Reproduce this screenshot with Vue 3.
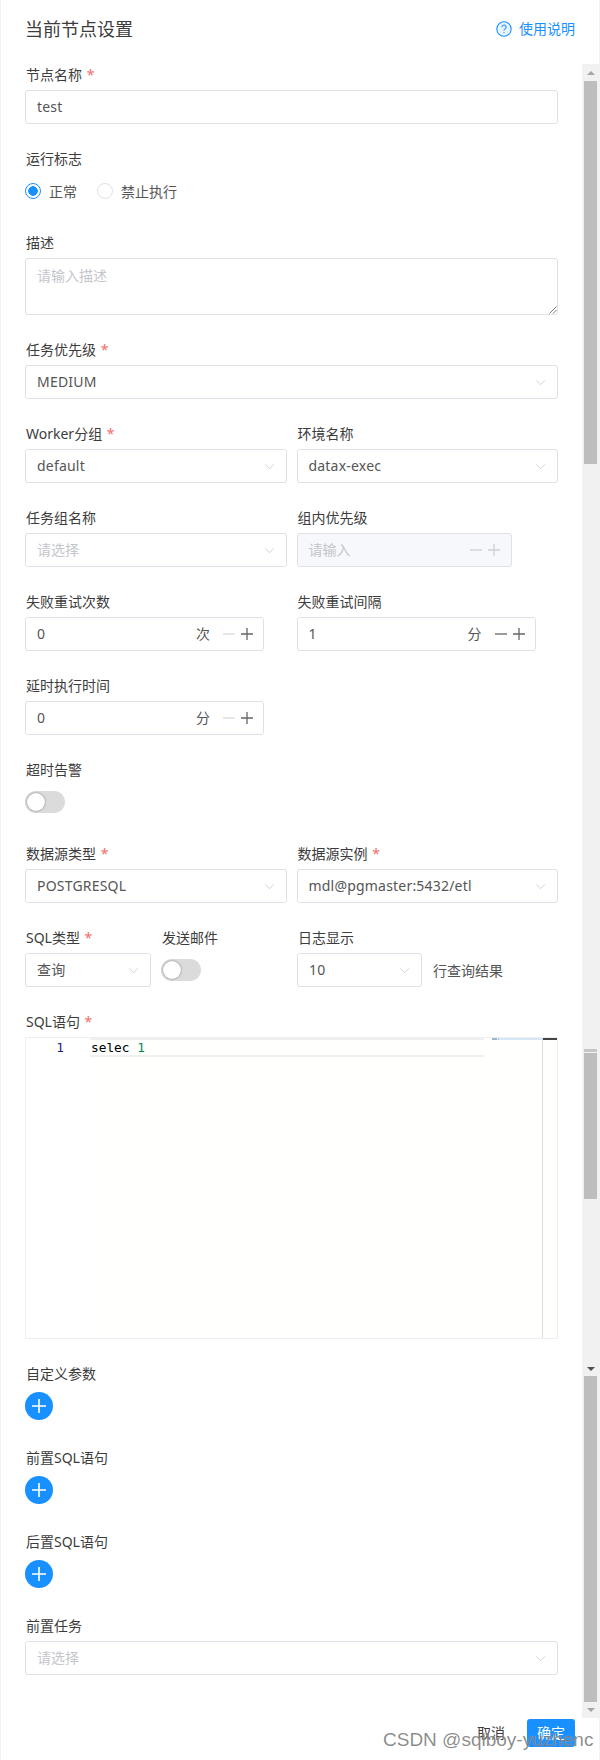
<script setup>
const addRows = ['自定义参数', '前置SQL语句', '后置SQL语句']
</script>

<template>
  <div class="page">
    <header class="head">
      <h1 class="title">当前节点设置</h1>
      <a class="help">
        <svg class="help-icon" viewBox="0 0 16 16">
          <circle cx="8" cy="8" r="7.2" />
          <path d="M5.9 6.2a2.1 2.1 0 1 1 3.3 1.7c-.8.5-1.2.9-1.2 1.7" />
          <path d="M8 11.2v1" />
        </svg>
        使用说明
      </a>
    </header>

    <div class="body">
      <form class="form">
        <div class="field">
          <label class="label">节点名称 <i>*</i></label>
          <div class="box"><span class="val">test</span></div>
        </div>

        <div class="field">
          <label class="label">运行标志</label>
          <div class="radios">
            <span class="radio on"></span><span class="radio-text">正常</span>
            <span class="radio second"></span><span class="radio-text">禁止执行</span>
          </div>
        </div>

        <div class="field">
          <label class="label">描述</label>
          <div class="box area">
            <span class="ph">请输入描述</span>
            <svg class="grip" viewBox="0 0 9 9"><path d="M8.5 1.5 1.5 8.500M8.500 5 5 8.500" /></svg>
          </div>
        </div>

        <div class="field">
          <label class="label">任务优先级 <i>*</i></label>
          <div class="box">
            <span class="val">MEDIUM</span>
            <svg class="chev" viewBox="0 0 12 8"><path d="M1 1.500 6 6.500l5-5" /></svg>
          </div>
        </div>

        <div class="row">
          <div class="field">
            <label class="label">Worker分组 <i>*</i></label>
            <div class="box">
              <span class="val">default</span>
              <svg class="chev" viewBox="0 0 12 8"><path d="M1 1.500 6 6.500l5-5" /></svg>
            </div>
          </div>
          <div class="field">
            <label class="label">环境名称</label>
            <div class="box">
              <span class="val">datax-exec</span>
              <svg class="chev" viewBox="0 0 12 8"><path d="M1 1.500 6 6.500l5-5" /></svg>
            </div>
          </div>
        </div>

        <div class="row">
          <div class="field">
            <label class="label">任务组名称</label>
            <div class="box">
              <span class="ph">请选择</span>
              <svg class="chev" viewBox="0 0 12 8"><path d="M1 1.500 6 6.500l5-5" /></svg>
            </div>
          </div>
          <div class="field">
            <label class="label">组内优先级</label>
            <div class="box disabled w-prio">
              <span class="ph">请输入</span>
              <span class="steps off">
                <svg viewBox="0 0 12 12"><path d="M0 6h12" /></svg>
                <svg viewBox="0 0 12 12"><path d="M0 6h12M6 0v12" /></svg>
              </span>
            </div>
          </div>
        </div>

        <div class="row">
          <div class="field">
            <label class="label">失败重试次数</label>
            <div class="box w-num">
              <span class="val">0</span>
              <span class="unit">次</span>
              <span class="steps">
                <svg class="dim" viewBox="0 0 12 12"><path d="M0 6h12" /></svg>
                <svg viewBox="0 0 12 12"><path d="M0 6h12M6 0v12" /></svg>
              </span>
            </div>
          </div>
          <div class="field">
            <label class="label">失败重试间隔</label>
            <div class="box w-num">
              <span class="val">1</span>
              <span class="unit">分</span>
              <span class="steps">
                <svg viewBox="0 0 12 12"><path d="M0 6h12" /></svg>
                <svg viewBox="0 0 12 12"><path d="M0 6h12M6 0v12" /></svg>
              </span>
            </div>
          </div>
        </div>

        <div class="row">
          <div class="field">
            <label class="label">延时执行时间</label>
            <div class="box w-num">
              <span class="val">0</span>
              <span class="unit">分</span>
              <span class="steps">
                <svg class="dim" viewBox="0 0 12 12"><path d="M0 6h12" /></svg>
                <svg viewBox="0 0 12 12"><path d="M0 6h12M6 0v12" /></svg>
              </span>
            </div>
          </div>
        </div>

        <div class="field">
          <label class="label">超时告警</label>
          <div class="switch-wrap"><span class="switch"></span></div>
        </div>

        <div class="row">
          <div class="field">
            <label class="label">数据源类型 <i>*</i></label>
            <div class="box">
              <span class="val">POSTGRESQL</span>
              <svg class="chev" viewBox="0 0 12 8"><path d="M1 1.500 6 6.500l5-5" /></svg>
            </div>
          </div>
          <div class="field">
            <label class="label">数据源实例 <i>*</i></label>
            <div class="box">
              <span class="val">mdl@pgmaster:5432/etl</span>
              <svg class="chev" viewBox="0 0 12 8"><path d="M1 1.500 6 6.500l5-5" /></svg>
            </div>
          </div>
        </div>

        <div class="row-sql">
          <div class="field">
            <label class="label">SQL类型 <i>*</i></label>
            <div class="box">
              <span class="val">查询</span>
              <svg class="chev" viewBox="0 0 12 8"><path d="M1 1.500 6 6.500l5-5" /></svg>
            </div>
          </div>
          <div class="field">
            <label class="label">发送邮件</label>
            <div class="switch-wrap"><span class="switch"></span></div>
          </div>
          <div class="field">
            <label class="label">日志显示</label>
            <div class="log">
              <div class="box w-log">
                <span class="val">10</span>
                <svg class="chev" viewBox="0 0 12 8"><path d="M1 1.500 6 6.500l5-5" /></svg>
              </div>
              <span class="log-text">行查询结果</span>
            </div>
          </div>
        </div>

        <div class="field">
          <label class="label">SQL语句 <i>*</i></label>
          <div class="editor">
            <div class="gutter">1</div>
            <div class="code"><div class="line">selec <b>1</b></div></div>
            <div class="minimap"><span class="mini-band"></span></div>
            <div class="ruler"><span class="ruler-band"></span></div>
          </div>
        </div>

        <div v-for="name in addRows" :key="name" class="field">
          <label class="label">{{ name }}</label>
          <div class="add-wrap">
            <span class="add">
              <svg viewBox="0 0 14 14"><path d="M0 7h14M7 0v14" /></svg>
            </span>
          </div>
        </div>

        <div class="field last">
          <label class="label">前置任务</label>
          <div class="box">
            <span class="ph">请选择</span>
            <svg class="chev" viewBox="0 0 12 8"><path d="M1 1.500 6 6.500l5-5" /></svg>
          </div>
        </div>
      </form>

      <div class="scrollbar">
        <span class="arrow up light"></span>
        <span class="thumb t1"></span>
        <span class="gap g1"></span>
        <span class="tick"></span>
        <span class="thumb t2"></span>
        <span class="gap g2"></span>
        <span class="arrow down dark"></span>
        <span class="thumb t3"></span>
        <span class="arrow down light end"></span>
      </div>
    </div>

    <footer class="foot">
      <button class="btn ghost" type="button">取消</button>
      <button class="btn primary" type="button">确定</button>
    </footer>

    <span class="mark">CSDN @sqlboy-yuzhenc</span>
  </div>
</template>

<style>
html, body { margin: 0; background: #fff; }
</style>

<style scoped>
* { box-sizing: border-box; }
.page {
  position: relative;
  width: 600px;
  height: 1760px;
  border-left: 1px solid #f1f2f8;
  font-family: "Noto Sans", "Noto Sans CJK SC", sans-serif;
  font-size: 14px;
  color: #3c3c3c;
  overflow: hidden;
}
.head {
  height: 64px;
  padding: 0 24px 6px 24px;
  display: flex;
  align-items: center;
  justify-content: space-between;
  border-right: 1px solid #f1f2f8;
}
.title { margin: 0; font-size: 18px; font-weight: 400; color: #3c3c3c; line-height: 24px; }
.help { display: flex; align-items: center; color: #1890ff; line-height: 20px; }
.help-icon { width: 16px; height: 16px; margin-right: 7px; fill: #e8f4ff; stroke: #1890ff; stroke-width: 1.1; }
.help-icon path { fill: none; }

.body { display: flex; height: 1654px; }
.form { width: 581px; padding: 0 24px; }
.field { margin-bottom: 24px; min-width: 0; }
.field.last { margin-bottom: 0; }
.label { display: block; height: 26px; padding: 0 0 4px 1px; line-height: 22px; color: #3c3c3c; white-space: nowrap; }
.label i { color: #f56c6c; font-style: normal; margin-left: 1px; }

.box {
  position: relative;
  height: 34px;
  display: flex;
  align-items: center;
  padding: 0 11px;
  border: 1px solid #dfe1e8;
  border-radius: 3px;
  background: #fff;
}
.val { color: #555; line-height: 20px; white-space: nowrap; letter-spacing: 0.2px; }
.ph { color: #c4c6cc; line-height: 20px; }
.area { height: 57px; align-items: flex-start; padding-top: 7px; }
.grip { position: absolute; right: 0; bottom: 0; width: 9px; height: 9px; fill: none; stroke: #555; stroke-width: 0.8; }
.chev { width: 11px; height: 7px; margin-left: auto; margin-right: 0; fill: none; stroke: #c8cad0; stroke-width: 1; }
.disabled { background: #f7f8fb; }
.w-prio { width: 215px; }
.w-num { width: 239px; padding-right: 10px; }
.w-log { width: 125px; flex: none; }
.unit { margin-left: auto; color: #555; line-height: 20px; }
.steps { display: flex; gap: 6px; margin-left: 13px; }
.disabled .steps { margin-left: auto; }
.steps svg { display: block; width: 12px; height: 12px; fill: none; stroke: #666; stroke-width: 1.3; }
.steps .dim { stroke: #d8d8d8; }
.steps.off svg { stroke: #cfd0d4; }

.row { display: grid; grid-template-columns: 1fr 1fr; column-gap: 10px; }
.row-sql { display: grid; grid-template-columns: 126px 126px 1fr; column-gap: 10px; }

.radios { height: 34px; display: flex; align-items: center; }
.radio { width: 16px; height: 16px; border-radius: 50%; border: 1px solid #e0e0e6; background: #fff; flex: none; }
.radio.on { border: 1.5px solid #1890ff; background: radial-gradient(circle, #1890ff 0 4.5px, #fff 5px); }
.radio.second { margin-left: 20px; }
.radio-text { margin-left: 8px; color: #555; }

.switch-wrap { height: 34px; display: flex; align-items: center; }
.switch { position: relative; width: 40px; height: 22px; border-radius: 11px; background: #dbdbdb; display: block; }
.switch::after {
  content: "";
  position: absolute;
  left: 2px;
  top: 2px;
  width: 18px;
  height: 18px;
  border-radius: 50%;
  background: #fff;
  box-shadow: 0 0 2px rgba(0, 0, 0, 0.5);
}

.log { display: flex; align-items: center; }
.log-text { margin-left: 11px; color: #555; white-space: nowrap; }

.editor {
  height: 302px;
  display: flex;
  border: 1px solid #eee;
  background: #fffffe;
  font-family: "DejaVu Sans Mono", monospace;
  font-size: 12.8px;
}
.gutter { width: 64px; padding: 2px 26px 0 0; text-align: right; line-height: 15px; color: #20208c; background: #fff; }
.code { width: 394px; flex: none; }
.line {
  height: 19px;
  border-top: 2px solid #f0f0f0;
  border-bottom: 2px solid #f0f0f0;
  padding-left: 1px;
  line-height: 15px;
  color: #000;
  white-space: pre;
}
.line b { color: #098658; font-weight: 400; }
.minimap { width: 59px; flex: none; border-right: 1px solid #dcdcdc; padding-left: 8px; }
.mini-band { display: block; height: 2px; background: linear-gradient(90deg, #9db6d0 0 5px, #d6e8f8 5px 6px, #a9cbe6 6px 7px, #d6e8f8 7px); }
.ruler { flex: 1; }
.ruler-band { display: block; height: 2px; background: #444; }

.add-wrap { height: 34px; display: flex; align-items: center; }
.add { width: 28px; height: 28px; border-radius: 50%; background: #1890ff; display: flex; align-items: center; justify-content: center; }
.add svg { width: 14px; height: 14px; fill: none; stroke: #fff; stroke-width: 1.6; }

.scrollbar { width: 18px; flex: none; background: #f1f1f1; display: flex; flex-direction: column; align-items: flex-start; padding-left: 2px; }
.thumb { display: block; width: 13px; background: #bdbdbd; flex: none; }
.t1 { height: 383px; }
.g1 { height: 585px; flex: none; }
.tick { display: block; width: 13px; height: 3px; background: #c6c6c6; margin-bottom: 1px; flex: none; }
.t2 { height: 146px; }
.g2 { height: 166px; flex: none; }
.t3 { height: 326px; }
.arrow { display: block; width: 0; height: 0; flex: none; margin-left: 2.500px; border-left: 4px solid transparent; border-right: 4px solid transparent; }
.arrow.up { margin-top: 7px; margin-bottom: 6px; border-bottom: 4px solid #a6a6a6; }
.arrow.down { margin-top: 2px; margin-bottom: 5px; border-top: 4px solid #505050; }
.arrow.down.light { border-top-color: #a6a6a6; margin-top: 6px; margin-bottom: 0; }

.foot {
  height: 42px;
  padding: 1px 24px 0 0;
  display: flex;
  justify-content: flex-end;
  align-items: flex-start;
  column-gap: 12px;
  border-right: 1px solid #f1f2f8;
}
.btn {
  width: 48px;
  height: 28px;
  padding: 0;
  border: 0;
  border-radius: 3px;
  font: inherit;
  line-height: 28px;
  cursor: pointer;
}
.ghost { background: transparent; color: #3c3c3c; }
.primary { background: #1890ff; color: #fff; }

.mark {
  position: absolute;
  left: 382px;
  top: 1729px;
  font-family: "Liberation Sans", sans-serif;
  font-size: 19px;
  line-height: 22px;
  color: rgba(95, 95, 95, 0.72);
  text-shadow: 0 0 1px rgba(255, 255, 255, 0.6);
  white-space: nowrap;
}
</style>
